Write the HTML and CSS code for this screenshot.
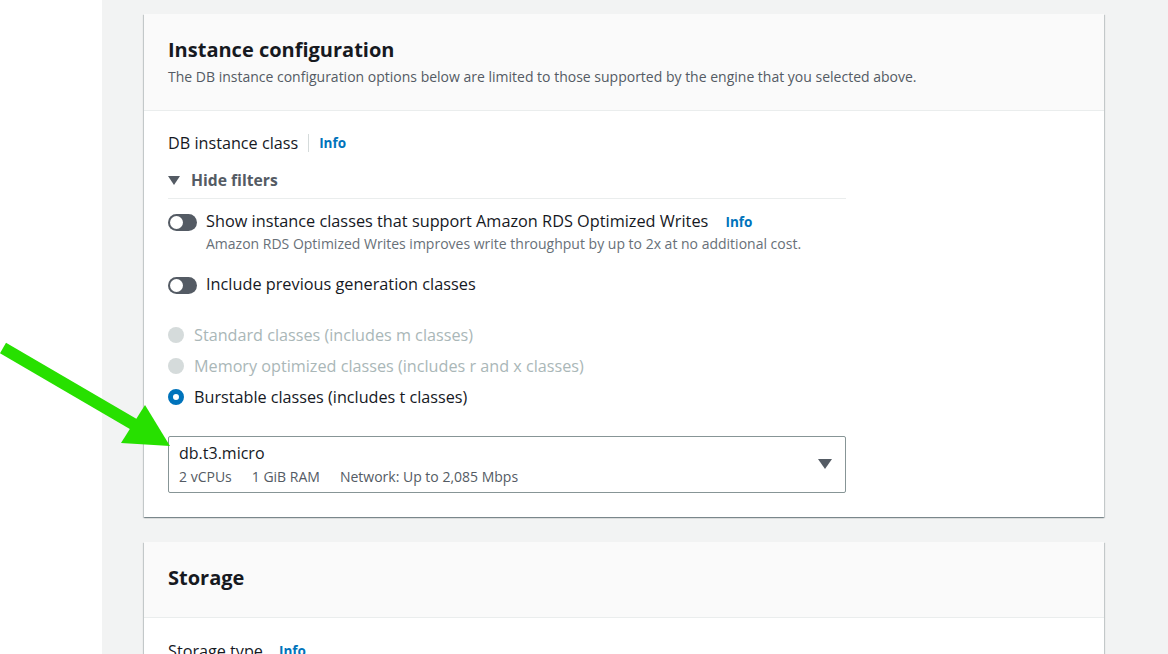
FILE: index.html
```html
<!DOCTYPE html>
<html>
<head>
<meta charset="utf-8">
<link rel="stylesheet" href="styles.css">
</head>
<body>
<div class="page">
  <div class="side"></div>
  <main class="main">
    <section class="card">
      <header class="card-head">
        <h2 class="card-title">Instance configuration</h2>
        <p class="card-desc">The DB instance configuration options below are limited to those supported by the engine that you selected above.</p>
      </header>
      <div class="card-body">
        <div class="label-row">
          <span class="label">DB instance class</span>
          <span class="sep"></span>
          <a class="info">Info</a>
        </div>
        <div class="filters">
          <span class="caret-down"></span>
          <span class="filters-text">Hide filters</span>
        </div>
        <div class="toggle-row first">
          <span class="toggle"><span class="knob"></span></span>
          <div class="toggle-text">
            <div class="toggle-label">Show instance classes that support Amazon RDS Optimized Writes <a class="info">Info</a></div>
            <div class="toggle-desc">Amazon RDS Optimized Writes improves write throughput by up to 2x at no additional cost.</div>
          </div>
        </div>
        <div class="toggle-row second">
          <span class="toggle"><span class="knob"></span></span>
          <div class="toggle-text">
            <div class="toggle-label">Include previous generation classes</div>
          </div>
        </div>
        <div class="radios">
          <div class="radio disabled"><span class="dot"></span><span>Standard classes (includes m classes)</span></div>
          <div class="radio disabled"><span class="dot"></span><span>Memory optimized classes (includes r and x classes)</span></div>
          <div class="radio checked"><span class="dot"></span><span>Burstable classes (includes t classes)</span></div>
        </div>
        <div class="select">
          <div class="select-text">
            <div class="select-value">db.t3.micro</div>
            <div class="select-tags"><span>2 vCPUs</span><span>1 GiB RAM</span><span>Network: Up to 2,085 Mbps</span></div>
          </div>
          <span class="select-caret"></span>
        </div>
      </div>
    </section>
    <section class="card">
      <header class="card-head storage-head">
        <h2 class="card-title">Storage</h2>
      </header>
      <div class="card-body storage-body">
        <div class="label-row">
          <span class="label">Storage type</span>
          <a class="info">Info</a>
        </div>
      </div>
    </section>
  </main>
</div>
<svg class="arrow" width="180" height="460" viewBox="0 0 180 460">
  <line x1="3" y1="348" x2="135" y2="425" stroke="#27e000" stroke-width="12"/>
  <polygon points="121,443 145,405 170,446" fill="#27e000"/>
</svg>
</body>
</html>
```
FILE: styles.css
```css
* { box-sizing: border-box; }
html, body { margin: 0; padding: 0; }
body {
  width: 1168px;
  height: 654px;
  overflow: hidden;
  font-family: "Open Sans", "Liberation Sans", sans-serif;
  color: #16191f;
  background: #fff;
  position: relative;
}
.page { display: flex; height: 654px; }
.side { width: 102px; background: #fff; flex: none; }
.main {
  flex: 1;
  background: #f2f3f3;
  padding: 14px 0 0 42px;
  display: flex;
  flex-direction: column;
  gap: 25px;
}
.card {
  width: 960px;
  background: #fff;
  box-shadow: 0 1px 1px 0 rgba(0,28,36,0.3), 1px 1px 1px 0 rgba(0,28,36,0.15), -1px 1px 1px 0 rgba(0,28,36,0.15);
  flex: none;
}
.card-head {
  background: #fafafa;
  border-bottom: 1px solid #eaeded;
  padding: 24px 24px 21px;
  height: 97px;
}
.storage-head { height: 76px; padding-top: 24px; }
.card-title {
  margin: 0;
  font-size: 20px;
  font-weight: 700;
  line-height: 24px;
}
.card-desc {
  margin: 5px 0 0;
  font-size: 14px;
  line-height: 20px;
  color: #545b64;
}
.card-body { padding: 21px 24px 24px; }
.storage-body { padding-top: 22px; }
.label-row { display: flex; align-items: center; height: 22px; }
.label { font-size: 16.2px; }
.sep { width: 1px; height: 18px; background: #d5dbdb; margin: 0 10px; }
.info {
  font-size: 13.5px;
  font-weight: 700;
  color: #0073bb;
}
.label-row .label + .info { margin-left: 16px; }
.filters {
  display: flex;
  align-items: center;
  margin-top: 15px;
  padding-bottom: 7px;
  border-bottom: 1px solid #eaeded;
  width: 678px;
}
.caret-down {
  width: 0; height: 0;
  border-left: 6px solid transparent;
  border-right: 6px solid transparent;
  border-top: 9px solid #545b64;
  margin: 0 11px 0 0;
}
.filters-text { font-size: 15.7px; font-weight: 700; color: #545b64; line-height: 22px; }
.toggle-row { display: flex; align-items: flex-start; }
.toggle-row.first { margin-top: 11px; }
.toggle-row.second { margin-top: 18px; }
.toggle {
  width: 29px; height: 17px;
  border-radius: 9px;
  background: #545b64;
  margin-top: 4px;
  margin-right: 9px;
  position: relative;
  flex: none;
}
.knob {
  position: absolute;
  left: 2px; top: 2px;
  width: 13px; height: 13px;
  border-radius: 50%;
  background: #fff;
}
.toggle-label { font-size: 16.3px; line-height: 22px; }
.toggle-label .info { margin-left: 13px; }
.toggle-desc { font-size: 14px; line-height: 22px; color: #687078; }
.radios { margin-top: 29px; display: flex; flex-direction: column; gap: 9px; }
.radio { display: flex; align-items: center; font-size: 16.2px; line-height: 22px; }
.radio .dot {
  width: 16px; height: 16px;
  border-radius: 50%;
  margin-right: 10px;
  flex: none;
}
.radio.disabled { color: #aab7b8; }
.radio.disabled .dot { background: #d5dbdb; }
.radio.checked .dot { border: 5px solid #0073bb; background: #fff; }
.select {
  margin-top: 28px;
  width: 678px;
  height: 57px;
  border: 1px solid #879596;
  border-radius: 2px;
  display: flex;
  align-items: flex-start;
  padding: 5px 13px 0 10px;
}
.select-text { flex: 1; }
.select-value { font-size: 16px; line-height: 22px; }
.select-tags { font-size: 14px; line-height: 20px; color: #545b64; display: flex; gap: 20px; margin-top: 3px; }
.select-caret {
  width: 0; height: 0;
  border-left: 7px solid transparent;
  border-right: 7px solid transparent;
  border-top: 10px solid #545b64;
  margin-top: 17px;
}
.arrow { position: absolute; left: 0; top: 0; }
```
